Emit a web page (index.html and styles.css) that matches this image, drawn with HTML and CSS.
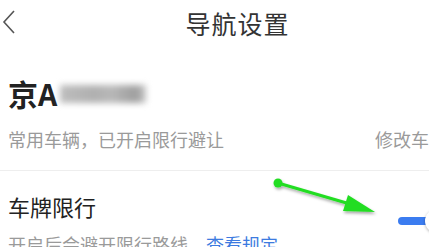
FILE: index.html
```html
<!DOCTYPE html>
<html lang="zh">
<head>
<meta charset="utf-8">
<link rel="stylesheet" href="styles.css">
</head>
<body>
<div class="screen">
  <header class="nav">
    <svg class="back" width="14" height="24" viewBox="0 0 14 24"><path d="M12 1 L2 12 L12 23" fill="none" stroke="#555" stroke-width="1.6"/></svg>
    <h1 class="nav-title">导航设置</h1>
  </header>
  <section class="car">
    <div class="plate"><span>京A</span><span class="blur"></span></div>
    <div class="row">
      <span class="sub">常用车辆，已开启限行避让</span>
      <span class="edit">修改车辆</span>
    </div>
  </section>
  <div class="divider"></div>
  <section class="limit">
    <div class="limit-text">
      <div class="limit-title">车牌限行</div>
      <div class="sub">开启后会避开限行路线，<span class="link">查看规定</span></div>
    </div>
    <div class="switch"><span class="knob"></span></div>
  </section>
  <svg class="arrow" width="475" height="247" viewBox="0 0 475 247">
    <defs>
      <filter id="sh" x="-20%" y="-50%" width="140%" height="200%">
        <feDropShadow dx="1" dy="2" stdDeviation="1.5" flood-color="#000" flood-opacity="0.35"/>
      </filter>
    </defs>
    <g filter="url(#sh)" fill="#22dd22" stroke="#22dd22">
      <circle cx="278" cy="183" r="4.5" stroke="none"/>
      <line x1="278" y1="183" x2="350" y2="204" stroke-width="3"/>
      <polygon points="375,212 343,211 348,195" stroke="none"/>
    </g>
  </svg>
</div>
</body>
</html>
```
FILE: styles.css
```css
html, body {
  margin: 0;
  padding: 0;
  background: #fff;
  overflow: hidden;
}
.screen {
  position: relative;
  width: 475px;
  height: 247px;
  overflow: hidden;
  font-family: "Noto Sans CJK SC", "Noto Sans", sans-serif;
  background: #fff;
}
.nav {
  position: relative;
  height: 45px;
  display: flex;
  align-items: center;
  justify-content: center;
}
.back {
  position: absolute;
  left: 2px;
  top: 10px;
}
.nav-title {
  margin: 0;
  font-size: 25px;
  font-weight: 400;
  color: #333;
  line-height: 44px;
  letter-spacing: 1px;
}
.car {
  padding: 0 8px;
}
.plate {
  margin-top: 28px;
  height: 40px;
  line-height: 40px;
  font-size: 30px;
  font-weight: 700;
  color: #222;
  display: flex;
  align-items: center;
}
.blur {
  display: inline-block;
  width: 86px;
  height: 18px;
  margin-left: 3px;
  margin-top: 2px;
  background: linear-gradient(90deg, #bdbdbd 0%, #b0b0b0 40%, #b8b8b8 60%, #9e9e9e 88%, #c8c8c8 100%);
  filter: blur(3px);
}
.row {
  margin-top: 13px;
  display: flex;
  justify-content: space-between;
  align-items: center;
  line-height: 26px;
}
.sub {
  font-size: 18px;
  color: #9a9a9a;
  line-height: 26px;
  white-space: nowrap;
}
.edit {
  font-size: 18px;
  color: #9a9a9a;
  margin-right: 20px;
}
.divider {
  margin-top: 18px;
  height: 1px;
  background: #eeeeee;
}
.limit {
  padding: 0 8px;
  margin-top: 20px;
  display: flex;
  justify-content: space-between;
}
.limit-title {
  font-size: 22px;
  line-height: 30px;
  color: #222;
  margin-bottom: 10px;
}
.link {
  color: #3d7be0;
}
.switch {
  position: relative;
  width: 56px;
  height: 8px;
  border-radius: 4px;
  background: #3b7cf0;
  margin-top: 26px;
  margin-right: 13px;
}
.knob {
  position: absolute;
  left: 27px;
  top: -8px;
  width: 24px;
  height: 24px;
  border-radius: 50%;
  background: #fff;
  box-shadow: 0 1px 3px rgba(0,0,0,0.3);
}
.arrow {
  position: absolute;
  left: 0;
  top: 0;
  pointer-events: none;
}
```
